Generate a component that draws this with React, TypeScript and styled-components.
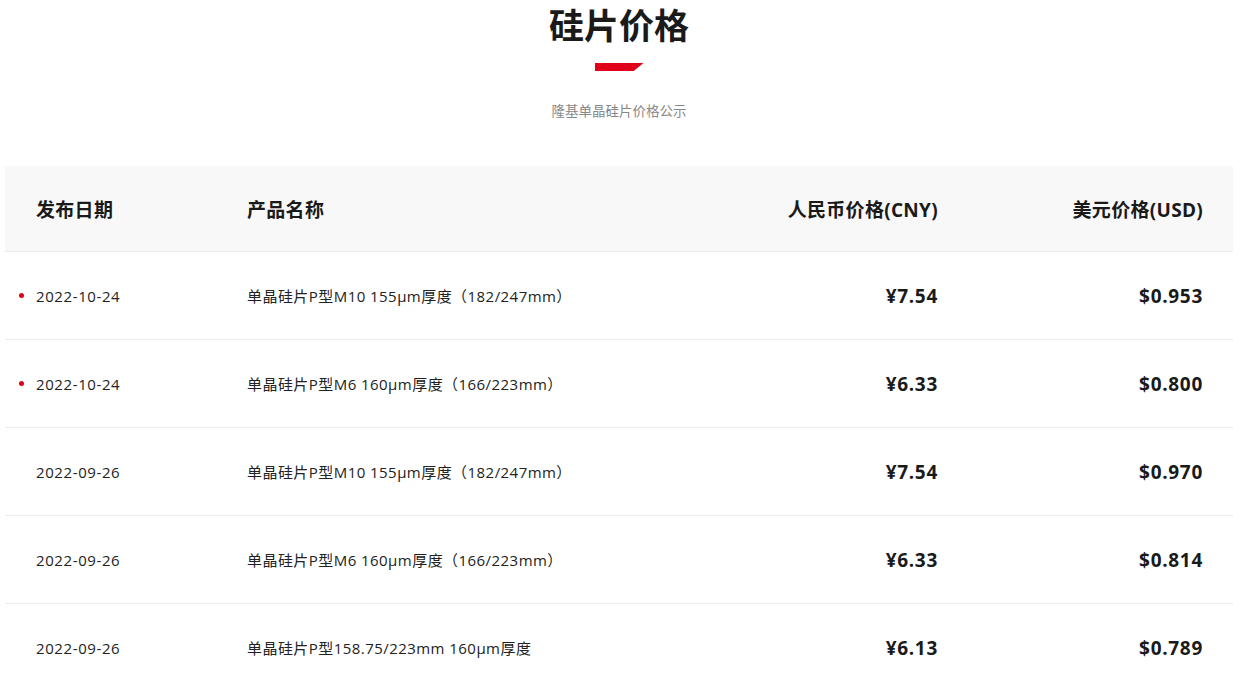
import React from "react";
import styled, { createGlobalStyle } from "styled-components";

const GlobalStyle = createGlobalStyle`
    body {
        margin: 0;
        background: #fff;
        font-family: "Open Sans", "Noto Sans CJK SC", sans-serif;
        color: #222;
    }
`;

const Page = styled.div`
    width: 1228px;
    margin-left: 5px;
`;
const Heading = styled.div`
    display: flex;
    flex-direction: column;
    align-items: center;
    padding-bottom: 46px;
`;
const Title = styled.h1`
    margin: 0;
    padding-top: 1px;
    font-size: 35px;
    line-height: 45px;
    font-weight: bold;
    font-family: "Noto Sans CJK SC", sans-serif;
    color: #1a1a1a;
`;
const RedBar = styled.div`
    width: 49px;
    height: 8px;
    margin-top: 17px;
    background: #e0001a;
    clip-path: polygon(0 0, 100% 0, 80% 100%, 0 100%);
`;
const Subtitle = styled.p`
    margin: 29px 0 0;
    font-size: 13.5px;
    line-height: 20px;
    color: #888;
    font-family: "Noto Sans CJK SC", sans-serif;
`;
const Table = styled.div`
    display: flex;
    flex-direction: column;
`;
const Row = styled.div<{ $head?: boolean }>`
    display: grid;
    grid-template-columns: 211px 1fr 230px 265px;
    align-items: center;
    height: ${p => (p.$head ? "85px" : "87px")};
    padding: 0 30px 0 31px;
    background: ${p => (p.$head ? "#f8f8f8" : "#fff")};
    border-bottom: 1px solid #ececec;
`;
const HeadCell = styled.div<{ $right?: boolean }>`
    font-size: 19px;
    font-weight: bold;
    letter-spacing: 0.3px;
    color: #1a1a1a;
    text-align: ${p => (p.$right ? "right" : "left")};
`;
const DateCell = styled.div`
    position: relative;
    font-size: 15px;
    letter-spacing: 0.6px;
    color: #222;
`;
const Dot = styled.span`
    position: absolute;
    left: -17px;
    top: 50%;
    width: 5px;
    height: 5px;
    margin-top: -3px;
    border-radius: 50%;
    background: #e0001a;
`;
const NameCell = styled.div`
    font-size: 15px;
    letter-spacing: 0.45px;
    color: #222;
`;
const Price = styled.div`
    font-size: 19px;
    font-weight: bold;
    letter-spacing: 0.7px;
    color: #1a1a1a;
    text-align: right;
`;

type Item = { date: string; name: string; cny: string; usd: string; fresh?: boolean };

const items: Item[] = [
    { date: "2022-10-24", name: "单晶硅片P型M10 155μm厚度（182/247mm）", cny: "¥7.54", usd: "$0.953", fresh: true },
    { date: "2022-10-24", name: "单晶硅片P型M6 160μm厚度（166/223mm）", cny: "¥6.33", usd: "$0.800", fresh: true },
    { date: "2022-09-26", name: "单晶硅片P型M10 155μm厚度（182/247mm）", cny: "¥7.54", usd: "$0.970" },
    { date: "2022-09-26", name: "单晶硅片P型M6 160μm厚度（166/223mm）", cny: "¥6.33", usd: "$0.814" },
    { date: "2022-09-26", name: "单晶硅片P型158.75/223mm 160μm厚度", cny: "¥6.13", usd: "$0.789" },
];

const App: React.FC = () => {
    return (
        <Page>
            <GlobalStyle />
            <Heading>
                <Title>硅片价格</Title>
                <RedBar />
                <Subtitle>隆基单晶硅片价格公示</Subtitle>
            </Heading>
            <Table>
                <Row $head>
                    <HeadCell>发布日期</HeadCell>
                    <HeadCell>产品名称</HeadCell>
                    <HeadCell $right>人民币价格(CNY)</HeadCell>
                    <HeadCell $right>美元价格(USD)</HeadCell>
                </Row>
                {items.map((it, i) => (
                    <Row key={i}>
                        <DateCell>
                            {it.fresh && <Dot />}
                            {it.date}
                        </DateCell>
                        <NameCell>{it.name}</NameCell>
                        <Price>{it.cny}</Price>
                        <Price>{it.usd}</Price>
                    </Row>
                ))}
            </Table>
        </Page>
    );
};

export default App;
